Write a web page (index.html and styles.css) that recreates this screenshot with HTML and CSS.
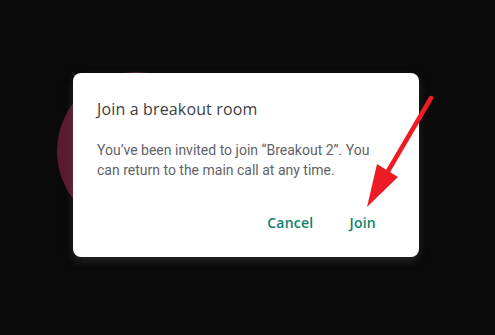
FILE: index.html
```html
<!DOCTYPE html>
<html>
<head>
<meta charset="utf-8">
<link rel="stylesheet" href="styles.css">
</head>
<body>
<div class="stage">
  <div class="avatar"></div>
  <div class="dialog">
    <h2 class="title">Join a breakout room</h2>
    <p class="body">You’ve been invited to join “Breakout 2”. You can return to the main call at any time.</p>
    <div class="actions">
      <button class="btn">Cancel</button>
      <button class="btn">Join</button>
    </div>
  </div>
  <svg class="arrow" width="495" height="335" viewBox="0 0 495 335">
    <line x1="431" y1="98" x2="384" y2="178" stroke="#ed1c24" stroke-width="4.5" stroke-linecap="round"/>
    <polygon points="367,207 377,164 398,177" fill="#ed1c24"/>
  </svg>
</div>
</body>
</html>
```
FILE: styles.css
```css
html, body {
  margin: 0;
  padding: 0;
  background: #0a0a0a;
}
.stage {
  position: relative;
  width: 495px;
  height: 335px;
  box-sizing: border-box;
  padding: 73px 0 0 73px;
  overflow: hidden;
}
.avatar {
  position: absolute;
  left: 57px;
  top: 72px;
  width: 158px;
  height: 158px;
  border-radius: 50%;
  background: #5a1b31;
}
.dialog {
  position: relative;
  width: 346px;
  height: 184px;
  box-sizing: border-box;
  background: #fff;
  border-radius: 8px;
  padding: 24px 27px 17px 24px;
  box-shadow: 0 4px 8px rgba(90, 90, 90, 0.35);
  display: flex;
  flex-direction: column;
}
.title {
  margin: 0;
  font-family: "Open Sans", sans-serif;
  font-weight: 400;
  font-size: 16px;
  line-height: 24px;
  letter-spacing: 0.15px;
  color: #3c4043;
}
.body {
  margin: 19px 0 0;
  font-family: Roboto, sans-serif;
  font-size: 14px;
  line-height: 20px;
  color: #5f6368;
}
.actions {
  margin-top: 24px;
  display: flex;
  justify-content: flex-end;
  gap: 4px;
}
.btn {
  border: 0;
  background: transparent;
  height: 36px;
  padding: 0 16px;
  font-family: "Open Sans", sans-serif;
  font-weight: 550;
  font-size: 14px;
  color: #0f7f70;
  letter-spacing: 0.25px;
}
.arrow {
  position: absolute;
  left: 0;
  top: 0;
}
```
